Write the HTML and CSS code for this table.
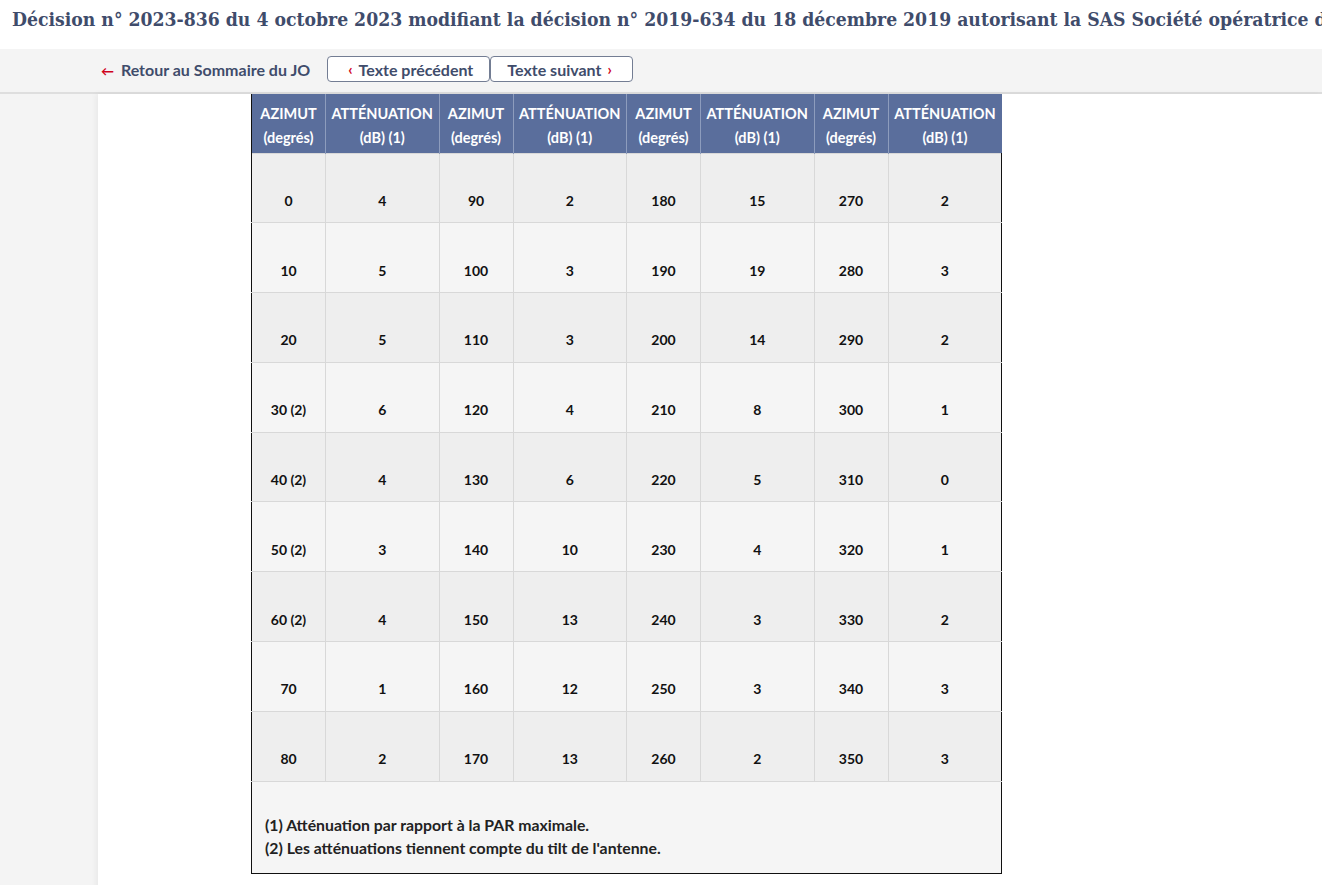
FILE: index.html
```html
<!DOCTYPE html>
<html lang="fr">
<head>
<meta charset="utf-8">
<title>Décision n° 2023-836</title>
<link rel="stylesheet" href="styles.css">
</head>
<body>
<header class="title-bar">
  <h1 class="title">Décision n° 2023-836 du 4 octobre 2023 modifiant la décision n° 2019-634 du 18 décembre 2019 autorisant la SAS Société opératrice d</h1>
</header>
<nav class="nav-bar">
  <a class="back-link" href="#"><span class="back-arrow">&#8592;</span> Retour au Sommaire du JO</a>
  <div class="nav-buttons">
    <a class="nav-btn prev" href="#"><span class="chev">&#8249;</span> Texte précédent</a>
    <a class="nav-btn next" href="#">Texte suivant <span class="chev">&#8250;</span></a>
  </div>
</nav>
<div class="page">
  <aside class="side"></aside>
  <main class="content">
    <table class="azimut">
      <thead>
        <tr>
          <th class="c-az">AZIMUT<br>(degrés)</th>
          <th class="c-at">ATTÉNUATION<br>(dB) (1)</th>
          <th class="c-az">AZIMUT<br>(degrés)</th>
          <th class="c-at">ATTÉNUATION<br>(dB) (1)</th>
          <th class="c-az">AZIMUT<br>(degrés)</th>
          <th class="c-at">ATTÉNUATION<br>(dB) (1)</th>
          <th class="c-az">AZIMUT<br>(degrés)</th>
          <th class="c-at">ATTÉNUATION<br>(dB) (1)</th>
        </tr>
      </thead>
      <tbody>
        <tr><td>0</td><td>4</td><td>90</td><td>2</td><td>180</td><td>15</td><td>270</td><td>2</td></tr>
        <tr><td>10</td><td>5</td><td>100</td><td>3</td><td>190</td><td>19</td><td>280</td><td>3</td></tr>
        <tr><td>20</td><td>5</td><td>110</td><td>3</td><td>200</td><td>14</td><td>290</td><td>2</td></tr>
        <tr><td>30 (2)</td><td>6</td><td>120</td><td>4</td><td>210</td><td>8</td><td>300</td><td>1</td></tr>
        <tr><td>40 (2)</td><td>4</td><td>130</td><td>6</td><td>220</td><td>5</td><td>310</td><td>0</td></tr>
        <tr><td>50 (2)</td><td>3</td><td>140</td><td>10</td><td>230</td><td>4</td><td>320</td><td>1</td></tr>
        <tr><td>60 (2)</td><td>4</td><td>150</td><td>13</td><td>240</td><td>3</td><td>330</td><td>2</td></tr>
        <tr><td>70</td><td>1</td><td>160</td><td>12</td><td>250</td><td>3</td><td>340</td><td>3</td></tr>
        <tr><td>80</td><td>2</td><td>170</td><td>13</td><td>260</td><td>2</td><td>350</td><td>3</td></tr>
        <tr class="foot">
          <td colspan="8">
            <p>(1) Atténuation par rapport à la PAR maximale.</p>
            <p>(2) Les atténuations tiennent compte du tilt de l'antenne.</p>
          </td>
        </tr>
      </tbody>
    </table>
  </main>
</div>
</body>
</html>
```
FILE: styles.css
```css
* { box-sizing: border-box; }
html, body { margin: 0; padding: 0; }
body {
  font-family: Lato, "Open Sans", "Liberation Sans", sans-serif;
  background: #ffffff;
  color: #111;
  width: 1322px;
  overflow: hidden;
}
.title-bar {
  height: 49px;
  padding-left: 12px;
  overflow: hidden;
  white-space: nowrap;
}
.title {
  margin: 0;
  font-family: "DejaVu Serif Condensed", "DejaVu Serif", serif;
  font-weight: bold;
  font-size: 19.2px;
  line-height: 39px;
  color: #3f4c6b;
}
.nav-bar {
  height: 45px;
  background: #f4f4f4;
  border-bottom: 2px solid #dedede;
  display: flex;
  align-items: center;
  padding-left: 101px;
  padding-bottom: 3px;
  gap: 17px;
}
.back-link, .nav-btn {
  font-weight: bold;
  font-size: 16px;
  color: #3f4c6b;
  text-decoration: none;
}
.back-arrow { color: #d0021b; font-size: 13px; margin-right: 3px; font-weight: bold; }
.nav-buttons { display: flex; }
.nav-btn {
  height: 26px;
  display: flex;
  align-items: center;
  gap: 6px;
  border: 1px solid #737d93;
  border-radius: 4px;
  background: #fff;
}
.nav-btn.prev { padding: 0 16px 0 20px; }
.nav-btn.next { padding: 0 20px 0 16px; }
.chev { color: #d0021b; font-size: 15px; }
.page {
  display: grid;
  grid-template-columns: 98px 1fr;
  min-height: 800px;
}
.side { background: #f4f4f4; }
.content {
  background: #fff;
  box-shadow: -2px 0 6px rgba(0,0,0,0.05);
  padding-left: 153px;
}
.azimut {
  border-collapse: collapse;
  width: 750px;
  table-layout: fixed;
  border-left: 1px solid #111;
}
.c-az { width: 74px; }
.c-at { width: 113.5px; }
.azimut th {
  background: #5a6e9c;
  color: #fff;
  font-weight: bold;
  font-size: 14.5px;
  line-height: 24px;
  height: 59px;
  padding: 5px 0 0;
  text-align: center;
  border-right: 1px solid #8d9cbd;
}
.azimut th:last-child { border-right: none; }
.azimut td {
  height: 69.8px;
  padding: 26px 0 0;
  text-align: center;
  font-weight: bold;
  font-size: 14px;
  line-height: 20px;
  color: #111;
  border: 1px solid #d8d8d8;
  background: #f5f5f5;
}
.azimut tbody tr:nth-child(odd) td { background: #eeeeee; }
.azimut td:first-child { border-left: 1px solid #111; }
.azimut td:last-child { border-right: 1px solid #111; }
.azimut tr.foot td {
  height: 92px;
  padding: 26px 13px 8px;
  text-align: left;
  font-size: 15.8px;
  line-height: 23px;
  color: #222;
  background: #f5f5f5;
  border: 1px solid #111;
  border-top: 1px solid #d8d8d8;
}
.foot p { margin: 0; }
```
